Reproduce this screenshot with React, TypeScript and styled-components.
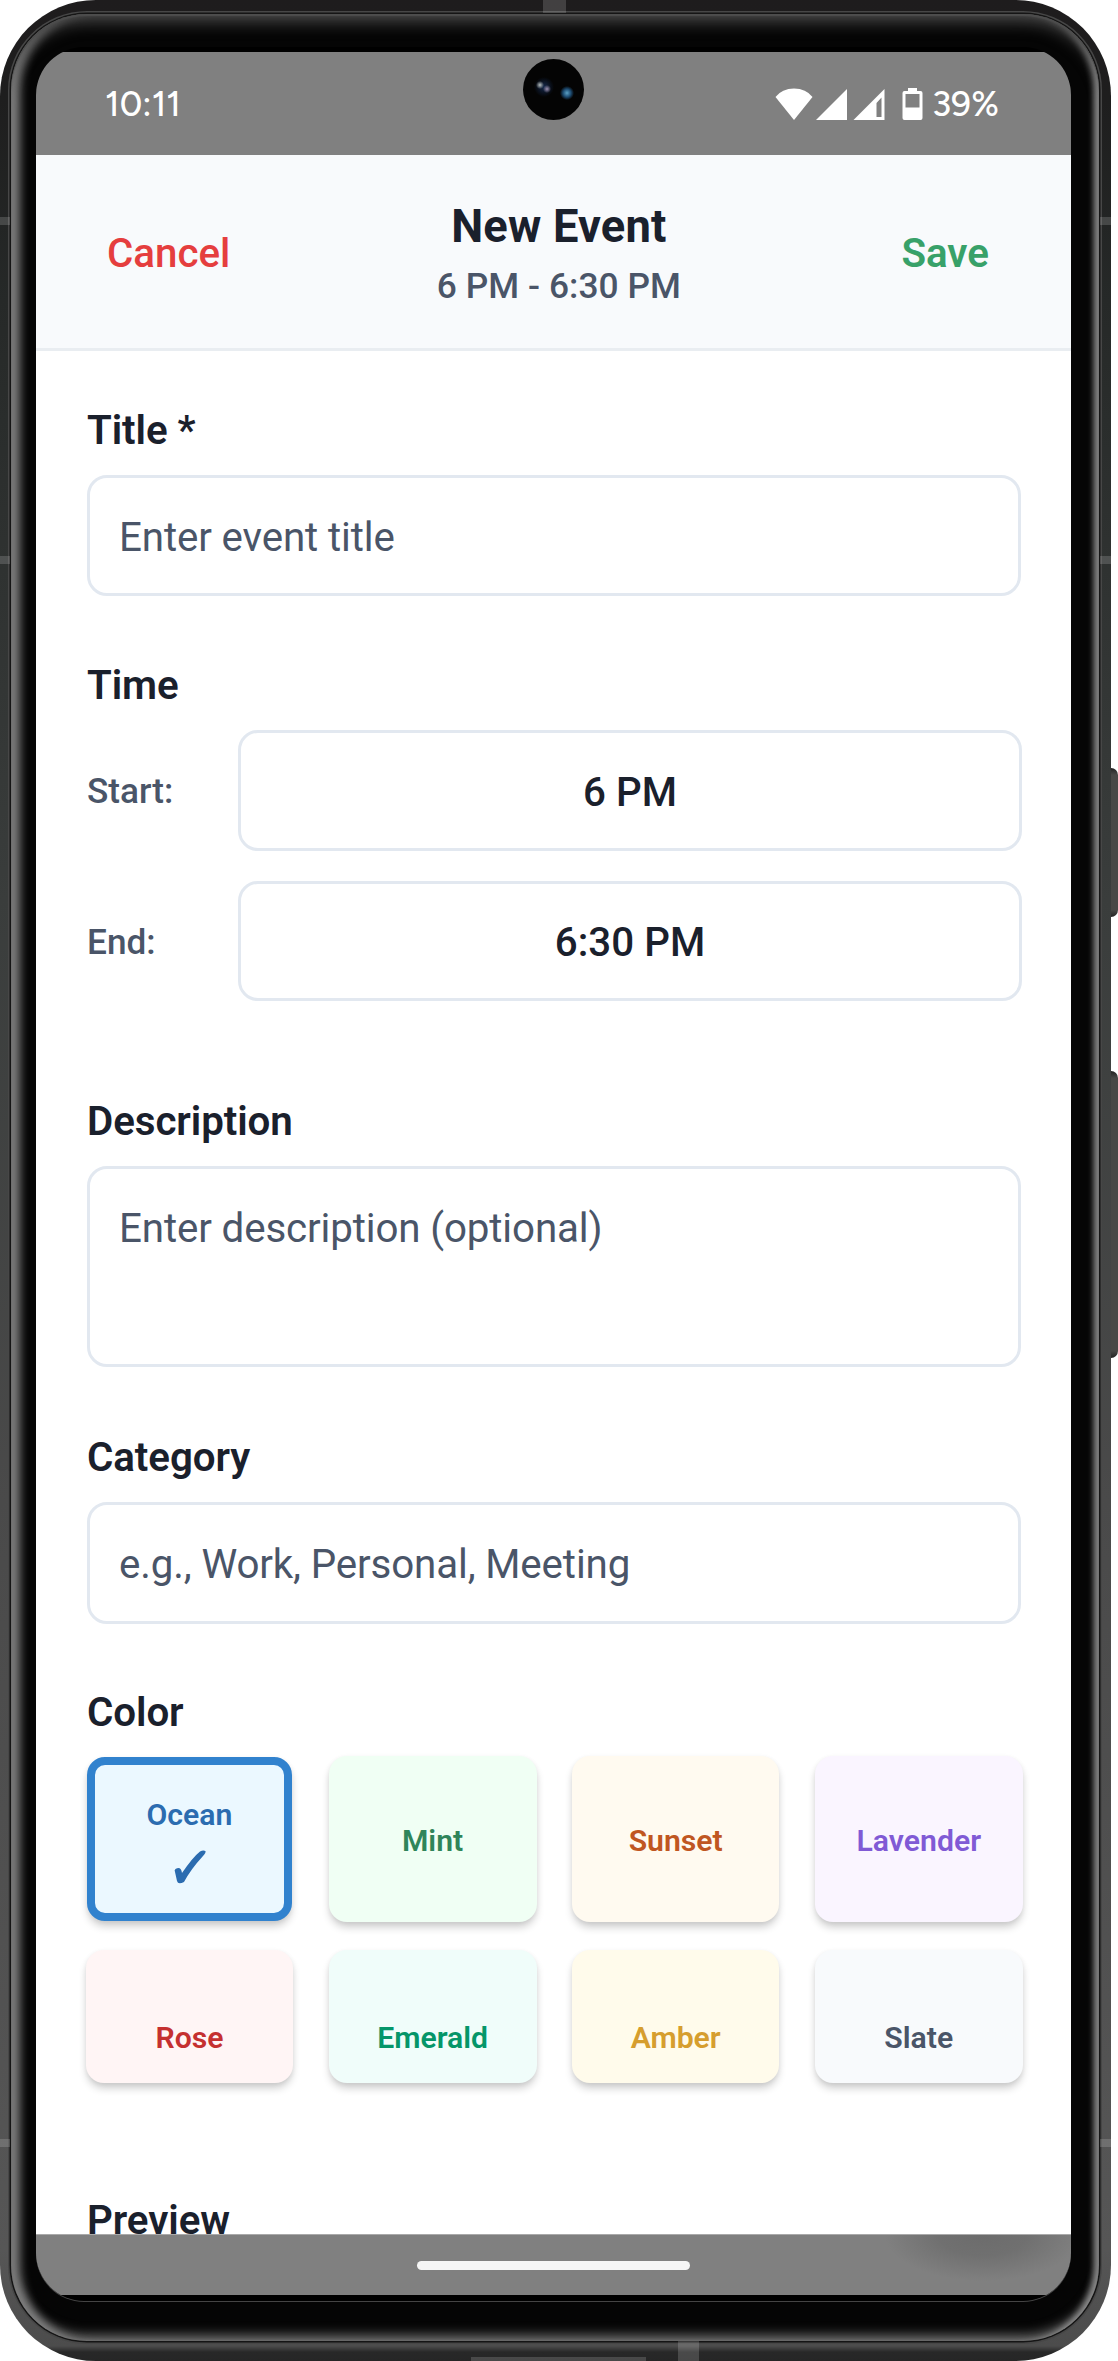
import React from "react";
import styled, { createGlobalStyle } from "styled-components";

const Global = createGlobalStyle`
  body { margin: 0; background: #fff; font-family: Roboto, "Liberation Sans", sans-serif; }
  * { box-sizing: border-box; }
`;

const Stage = styled.div`
  position: relative;
  width: 1118px;
  height: 2361px;
  overflow: hidden;
`;

const SideKey = styled.div<{ $top: number; $height: number }>`
  position: absolute;
  left: 1104px;
  top: ${(p) => p.$top}px;
  width: 14px;
  height: ${(p) => p.$height}px;
  border-radius: 0 7px 7px 0;
  background: linear-gradient(#222, #484846 7px, #484846 calc(100% - 7px), #222);
`;

const Antenna = styled.div<{ $x: number; $y: number; $w: number; $h: number }>`
  position: absolute;
  left: ${(p) => p.$x}px;
  top: ${(p) => p.$y}px;
  width: ${(p) => p.$w}px;
  height: ${(p) => p.$h}px;
  background: rgba(255, 255, 255, 0.16);
`;

const Device = styled.div`
  position: relative;
  width: 1111px;
  height: 2361px;
  padding: 14px 12px 20px 11px;
  border-radius: 96px;
  overflow: hidden;
  background: linear-gradient(#1e1c1d 0, #1e1e1e 100px, #262928 300px, #3a3d3c 900px, #4a4a4a 1500px, #565656 2250px, #4c4c4c 2346px, #282828 2352px, #262626 2361px);
`;

const Bezel = styled.div`
  height: 2327px;
  padding: 33px 28px 40px 25px;
  border-radius: 76px;
  background: #050505;
  box-shadow: inset 0 2px 1px #4d4d4d, inset 0 16px 16px -8px #484848, inset 13px 0 10px -4px #808080,
    inset -8px 0 6px -3px #909090, inset 0 -11px 12px -5px #6c6c6c, 0 0 0 1.5px #151515, 0 0 0 3px #474747;
`;

const Screen = styled.main`
  position: relative;
  height: 2254px;
  padding: 5px 0 6px;
  border-radius: 48px;
  overflow: hidden;
  background: #000;
  box-shadow: 0 1px 0 #444;
  display: flex;
  flex-direction: column;
`;

const StatusBar = styled.div`
  flex: 0 0 103px;
  display: flex;
  align-items: center;
  justify-content: space-between;
  padding: 0 72px 0 69px;
  background: #808080;
  color: #fff;
  font: 500 35px/40px Figtree, sans-serif;
  letter-spacing: 0.1px;
`;

const StatusIcons = styled.div`
  display: flex;
  align-items: center;
  gap: 9px;
`;

const Camera = styled.div`
  position: absolute;
  left: 487px;
  top: 12px;
  width: 61px;
  height: 61px;
  border-radius: 50%;
  background: radial-gradient(circle at 44px 34px, #5aa0c4 0, #1c4a70 4px, transparent 7px),
    radial-gradient(circle at 17px 26px, #b8c0c0 0, transparent 4px),
    radial-gradient(circle at 24px 30px, #9c90b0 0, transparent 4px),
    radial-gradient(circle at 21px 28px, #14284c 0, transparent 10px), #040404;
`;

const Header = styled.header`
  flex: 0 0 196px;
  display: flex;
  justify-content: space-between;
  align-items: center;
  padding: 3px 82px 0 71px;
  background: #f8fafc;
  border-bottom: 3px solid #e9edf1;
`;

const HeaderAction = styled.button<{ $color: string; $weight: number }>`
  padding: 2px 0 0;
  border: 0;
  background: none;
  color: ${(p) => p.$color};
  font: ${(p) => p.$weight} 40.3px/48px Roboto, sans-serif;
`;

const HeaderTitle = styled.div`
  text-align: center;
  margin-left: -14px;
`;

const Heading = styled.h1`
  margin: 0;
  color: #1a202c;
  font-size: 45.3px;
  font-weight: 700;
  letter-spacing: 0.2px;
  line-height: 60px;
`;

const Range = styled.div`
  margin-top: 5px;
  color: #4a5568;
  font-size: 35.3px;
  font-weight: 500;
  letter-spacing: 0.05px;
  line-height: 48px;
`;

const Form = styled.div`
  flex: 1 1 0;
  min-height: 0;
  overflow: hidden;
  padding: 56px 50px 0 51px;
  background: #fff;
`;

const Section = styled.section<{ $gap: number }>`
  margin-bottom: ${(p) => p.$gap}px;
`;

const Label = styled.h2`
  margin: 0 0 20px;
  color: #1a202c;
  font-size: 40.3px;
  font-weight: 600;
  letter-spacing: -0.08px;
  line-height: 48px;
`;

const Field = styled.div<{ $height: number }>`
  height: ${(p) => p.$height}px;
  padding: 36px 29px 0;
  border: 3px solid #e2e8f0;
  border-radius: 20px;
  color: #4a5568;
  font-size: 40.3px;
  letter-spacing: -0.13px;
  line-height: 48px;
`;

const TimeRow = styled.div`
  display: grid;
  grid-template-columns: 151px 1fr;
  align-items: center;
  margin-right: -1px;
  & + & { margin-top: 30px; }
`;

const TimeLabel = styled.span`
  padding-top: 2px;
  color: #4a5568;
  font-size: 35.2px;
  font-weight: 500;
`;

const TimeButton = styled.button`
  height: 120.5px;
  padding: 5px 0 0;
  border: 3px solid #e2e8f0;
  border-radius: 20px;
  background: #fff;
  color: #1a202c;
  font: 500 40.3px/48px Roboto, sans-serif;
`;

const Swatches = styled.div`
  display: grid;
  grid-template-columns: 207px 208px 207px 208px;
  grid-template-rows: 165.5px 133px;
  column-gap: 35.6px;
  row-gap: 28px;
  margin: -1px -3px 0 -1px;
`;

const Swatch = styled.button<{ $bg: string; $color: string; $selected?: boolean; $low?: boolean }>`
  display: flex;
  flex-direction: column;
  align-items: center;
  justify-content: center;
  margin: ${(p) => (p.$selected ? "1px 1px 1px" : 0)};
  padding: ${(p) => (p.$low ? "43px 0 0" : "3px 0 0")};
  border: ${(p) => (p.$selected ? "8px solid #3182ce" : 0)};
  border-radius: 18px;
  background: ${(p) => p.$bg};
  color: ${(p) => p.$color};
  box-shadow: 0 6px 8px -1px rgba(0, 0, 0, 0.2), 0 1px 5px rgba(0, 0, 0, 0.05);
  font: 600 30.2px/36px Roboto, sans-serif;
`;

const Check = styled.svg`
  width: 34px;
  height: 36px;
  margin-top: 16px;
`;

const NavBar = styled.nav`
  flex: 0 0 61px;
  display: flex;
  align-items: center;
  justify-content: center;
  border-top: 1px solid #aaa;
  background: radial-gradient(ellipse 98px 46px at 947px 0, #6c6c6c 0, #707070 45%, #808080 100%);
`;

const HomePill = styled.div`
  width: 273px;
  height: 9px;
  border-radius: 5px;
  background: #f5f5f5;
`;

const colors = [
  { name: "Ocean", bg: "#ebf8ff", color: "#2b6cb0" },
  { name: "Mint", bg: "#f0fff4", color: "#2f855a" },
  { name: "Sunset", bg: "#fffaf0", color: "#c05621" },
  { name: "Lavender", bg: "#faf5ff", color: "#805ad5" },
  { name: "Rose", bg: "#fff5f5", color: "#c53030" },
  { name: "Emerald", bg: "#f0fdfa", color: "#059669" },
  { name: "Amber", bg: "#fffbeb", color: "#d69e2e" },
  { name: "Slate", bg: "#f8fafc", color: "#4a5568" },
];

export default function App() {
  return (
    <>
      <Global />
      <Stage>
        <SideKey $top={768} $height={149} />
        <SideKey $top={1071} $height={287} />
        <Device>
          <Antenna $x={543} $y={0} $w={23} $h={13} />
          <Antenna $x={0} $y={217} $w={10} $h={8} />
          <Antenna $x={1100} $y={217} $w={11} $h={8} />
          <Antenna $x={0} $y={556} $w={10} $h={8} />
          <Antenna $x={1100} $y={556} $w={11} $h={8} />
          <Antenna $x={0} $y={2139} $w={10} $h={8} />
          <Antenna $x={1100} $y={2139} $w={11} $h={8} />
          <Antenna $x={678} $y={2341} $w={21} $h={20} />
          <Antenna $x={471} $y={2357} $w={175} $h={4} />
          <Bezel>
            <Screen>
              <StatusBar>
                <span>10:11</span>
                <StatusIcons>
                  <svg width="148" height="34" viewBox="0 0 148 34" fill="#fff">
                    <path d="M19 33 0.5 10Q7 1.500 19 1.500T37.500 10Z" />
                    <path d="M72 2V33H41Z" />
                    <path fillRule="evenodd" d="M109.500 2V33H78.500ZM106.500 10.500 101.500 16V30H106.500Z" />
                    <path fillRule="evenodd" d="M133 1H142V4H145.500Q147.500 4 147.500 6V31Q147.500 33 145.500 33H129.500Q127.500 33 127.500 31V6Q127.500 4 129.500 4H133ZM130.500 7V20.500H144.500V7Z" />
                  </svg>
                  <span>39%</span>
                </StatusIcons>
                <Camera />
              </StatusBar>
              <Header>
                <HeaderAction $color="#e53e3e" $weight={500}>Cancel</HeaderAction>
                <HeaderTitle>
                  <Heading>New Event</Heading>
                  <Range>6 PM - 6:30 PM</Range>
                </HeaderTitle>
                <HeaderAction $color="#38a169" $weight={600}>Save</HeaderAction>
              </Header>
              <Form>
                <Section $gap={66}>
                  <Label>Title *</Label>
                  <Field $height={121}>Enter event title</Field>
                </Section>
                <Section $gap={97}>
                  <Label>Time</Label>
                  <TimeRow>
                    <TimeLabel>Start:</TimeLabel>
                    <TimeButton>6 PM</TimeButton>
                  </TimeRow>
                  <TimeRow>
                    <TimeLabel>End:</TimeLabel>
                    <TimeButton>6:30 PM</TimeButton>
                  </TimeRow>
                </Section>
                <Section $gap={67.4}>
                  <Label>Description</Label>
                  <Field $height={201}>Enter description (optional)</Field>
                </Section>
                <Section $gap={65.4}>
                  <Label>Category</Label>
                  <Field $height={121.5}>e.g., Work, Personal, Meeting</Field>
                </Section>
                <Section $gap={114}>
                  <Label>Color</Label>
                  <Swatches>
                    {colors.map((c, i) => (
                      <Swatch key={c.name} $bg={c.bg} $color={c.color} $selected={i === 0} $low={i > 3}>
                        {c.name}
                        {i === 0 && (
                          <Check viewBox="0 0 34 36" fill="#2b6cb0">
                            <path d="M2 23Q1 21 2.500 20Q8 17 9 24Q20 8 27 2.500Q30 1 32.500 2Q33 4 30 7Q18 20 11 33Q5 36 4 32Z" />
                          </Check>
                        )}
                      </Swatch>
                    ))}
                  </Swatches>
                </Section>
                <Label>Preview</Label>
              </Form>
              <NavBar>
                <HomePill />
              </NavBar>
            </Screen>
          </Bezel>
        </Device>
      </Stage>
    </>
  );
}
